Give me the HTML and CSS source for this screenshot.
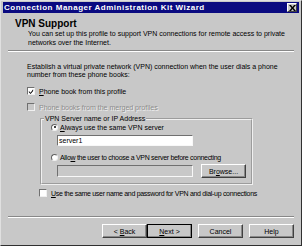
FILE: index.html
```html
<!DOCTYPE html>
<html lang="en">
<head>
    <meta charset="UTF-8">
    <title>Connection Manager Administration Kit Wizard</title>
    <link rel="stylesheet" href="styles.css">
</head>
<body>
    <div class="window">
        <div class="titlebar">
            <span class="title">Connection Manager Administration Kit Wizard</span>
            <span class="close">
                <svg width="7" height="6" viewBox="0 0 7 6"><path d="M0 0h2l1.5 2 1.5-2h2l-2.5 3 2.5 3h-2l-1.5-2-1.5 2h-2l2.5-3z" fill="#000"/></svg>
            </span>
        </div>

        <div class="header">
            <div class="heading">VPN Support</div>
            <p class="subtitle">You can set up this profile to support VPN connections for remote access to private networks over the Internet.</p>
        </div>

        <div class="rule"></div>

        <div class="content">
            <p class="intro">Establish a virtual private network (VPN) connection when the user dials a phone number from these phone books:</p>

            <div class="check">
                <span class="box">
                    <svg width="7" height="7" viewBox="0 0 7 7"><path d="M1 3l2 2 3-4v2l-3 3.5-2-2z" fill="#000"/></svg>
                </span>
                <span><u>P</u>hone book from this profile</span>
            </div>
            <div class="check disabled">
                <span class="box"></span>
                <span>Phone books from the merged profiles</span>
            </div>

            <fieldset class="group">
                <legend>VPN Server name or IP Address</legend>
                <div class="radio">
                    <span class="dot on"></span>
                    <span><u>A</u>lways use the same VPN server</span>
                </div>
                <div class="field">server1</div>
                <div class="radio second">
                    <span class="dot"></span>
                    <span class="tight">Allo<u>w</u> the user to choose a VPN server before connecting</span>
                </div>
                <div class="field-row">
                    <div class="field off"></div>
                    <button class="btn browse">Br<u>o</u>wse...</button>
                </div>
            </fieldset>

            <div class="check last">
                <span class="box"></span>
                <span class="tight"><u>U</u>se the same user name and password for VPN and dial-up connections</span>
            </div>
        </div>

        <div class="rule"></div>

        <div class="buttons">
            <button class="btn">&lt; <u>B</u>ack</button>
            <button class="btn default"><u>N</u>ext &gt;</button>
            <button class="btn gap">Cancel</button>
            <button class="btn gap">Help</button>
        </div>
    </div>
</body>
</html>
```

FILE: styles.css
```css
body {
    margin: 0;
    font-family: 'Liberation Sans', Arial, sans-serif;
    font-size: 7px;
    color: #000;
    background: #c8c8c8;
}
.window {
    width: 302px;
    height: 246px;
    box-sizing: border-box;
    padding: 1px 2px 2px 2px;
    background: #c8c8c8;
    border: 1px solid;
    border-color: #e0e0e0 #303030 #303030 #e0e0e0;
    display: flex;
    flex-direction: column;
}
.titlebar {
    height: 11px;
    background: #0a0a80;
    color: #fff;
    display: flex;
    align-items: center;
    justify-content: space-between;
    padding: 0 2px 0 1px;
}
.title {
    font-weight: bold;
    font-size: 8px;
    letter-spacing: 0.5px;
}
.close {
    width: 8px;
    height: 7px;
    background: #c8c8c8;
    border: 1px solid;
    border-color: #fff #404040 #404040 #fff;
    display: flex;
    align-items: center;
    justify-content: center;
}
.header {
    padding: 6px 0 0 12px;
}
.heading {
    font-weight: bold;
    font-size: 10px;
    line-height: 10px;
}
.subtitle {
    margin: 0 0 0 13px;
    line-height: 9px;
}
.rule {
    margin: 3px 5px 0 5px;
    height: 0;
    border-top: 1px solid #888;
    border-bottom: 1px solid #fff;
}
.content {
    padding: 11px 0 0 24px;
    flex: 1;
}
.intro {
    margin: 0;
    line-height: 8px;
    width: 262px;
}
.check {
    display: flex;
    align-items: center;
    gap: 4px;
    height: 8px;
    margin-top: 8px;
}
.check.disabled {
    color: #8c8c8c;
    text-shadow: 1px 1px 0 #f0f0f0;
}
.tight {
    letter-spacing: -0.3px;
}
.box {
    width: 6px;
    height: 6px;
    background: #fff;
    border: 1px solid;
    border-color: #707070 #f0f0f0 #f0f0f0 #707070;
    display: flex;
    align-items: center;
    justify-content: center;
}
.check.disabled .box {
    background: #c8c8c8;
}
.group {
    margin: 4px 0 0 13px;
    width: 213px;
    box-sizing: border-box;
    padding: 0 0 5px 9px;
    border: 2px groove #f0f0f0;
}
.group legend {
    padding: 0 1px;
    margin-left: -7px;
    line-height: 8px;
}
.radio {
    display: flex;
    align-items: center;
    gap: 2px;
    height: 8px;
}
.radio.second {
    margin-top: 7px;
}
.dot {
    width: 5px;
    height: 5px;
    border-radius: 50%;
    background: #fff;
    border: 1px solid;
    border-color: #606060 #f0f0f0 #f0f0f0 #606060;
    display: flex;
    align-items: center;
    justify-content: center;
}
.dot.on::after {
    content: "";
    width: 2px;
    height: 2px;
    border-radius: 50%;
    background: #000;
}
.field {
    margin: 4px 0 0 6px;
    width: 136px;
    height: 11px;
    box-sizing: border-box;
    background: #fff;
    border: 1px solid;
    border-color: #707070 #f8f8f8 #f8f8f8 #707070;
    padding: 1px 1px;
    line-height: 8px;
}
.field-row {
    display: flex;
    align-items: center;
    margin-top: 3px;
}
.field-row .field {
    margin-top: 0;
    height: 12px;
}
.field.off {
    background: #c8c8c8;
}
.btn {
    font-family: 'Liberation Sans', Arial, sans-serif;
    font-size: 7px;
    color: #000;
    background: #c8c8c8;
    width: 45px;
    height: 14px;
    padding: 0;
    border: 1px solid;
    border-color: #fff #404040 #404040 #fff;
    box-shadow: inset -1px -1px 0 #888;
}
.browse {
    margin-left: 8px;
}
.check.last {
    margin-top: 4px;
    margin-left: 12px;
}
.buttons {
    display: flex;
    justify-content: flex-end;
    padding: 6px 5px 5px 0;
}
.btn.default {
    outline: 1px solid #000;
    outline-offset: -1px;
}
.btn.gap {
    margin-left: 6px;
}
```
